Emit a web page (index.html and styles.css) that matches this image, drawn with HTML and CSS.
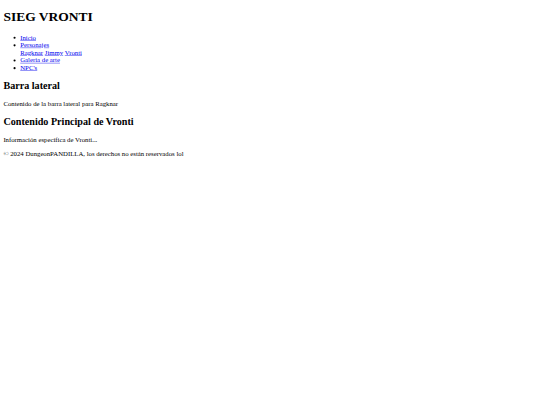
FILE: index.html
```html
<!DOCTYPE html>
<html lang="es" class="root">
<head>
<meta charset="utf-8">
<title>SIEG VRONTI</title>
<link rel="stylesheet" href="styles.css">
</head>
<body class="body">
<div class="page">
<header>
<h1 class="title">SIEG VRONTI</h1>
<nav>
<ul class="menu">
<li><a class="link" href="#">Inicio</a></li>
<li><a class="link" href="#">Personajes</a>
<div class="dropdown"><a class="link" href="#">Ragknar</a> <a class="link" href="#">Jimmy</a> <a class="link" href="#">Vronti</a></div>
</li>
<li><a class="link" href="#">Galeria de arte</a></li>
<li><a class="link" href="#">NPC's</a></li>
</ul>
</nav>
</header>
<aside>
<h2 class="heading">Barra lateral</h2>
<p class="text">Contenido de la barra lateral para Ragknar</p>
</aside>
<main>
<h2 class="heading">Contenido Principal de Vronti</h2>
<p class="text">Información específica de Vronti...</p>
</main>
<footer>
<p class="text">© 2024 DungeonPANDILLA, los derechos no están reservados lol</p>
</footer>
</div>
</body>
</html>
```
FILE: styles.css
```css
.root {
  background: #ffffff;
}
.body {
  margin: 0;
  background: #ffffff;
}
.page {
  display: flow-root;
  padding: 0 8px 8px;
  font-family: "Liberation Serif", "Times New Roman", serif;
  font-size: 16px;
  color: #000000;
  transform: scale(0.421875);
  transform-origin: 0 0;
}
.title {
  font-size: 32px;
  font-weight: bold;
  margin: 21.44px 0;
}
.menu {
  margin: 16px 0;
  padding-left: 40px;
  list-style: disc;
}
.link {
  color: #0000ee;
  text-decoration: underline;
}
.heading {
  font-size: 24px;
  font-weight: bold;
  margin: 19.92px 0;
}
.text {
  margin: 16px 0;
}
```
